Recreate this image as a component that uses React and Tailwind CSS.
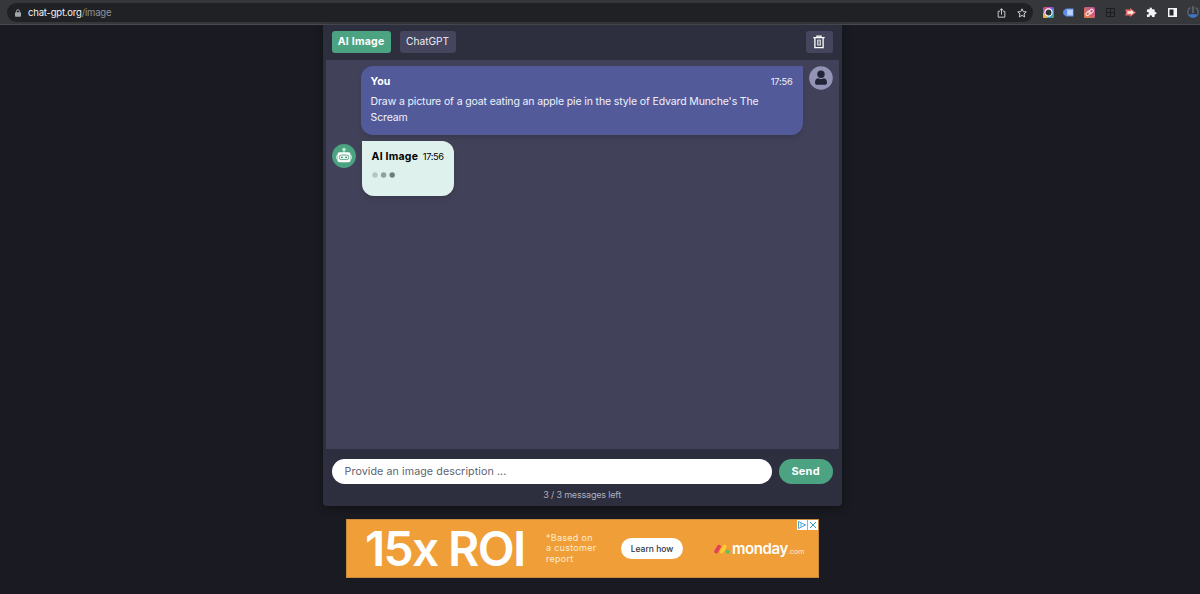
import clsx from 'clsx'

function LockIcon() {
  return (
    <svg viewBox="0 0 8 10" className="ml-2 h-[8px] w-[6px] fill-[#a3a6aa]">
      <path d="M1 4h6a1 1 0 0 1 1 1v4a1 1 0 0 1-1 1H1a1 1 0 0 1-1-1V5a1 1 0 0 1 1-1z" />
      <path d="M2 4.500V2.700a2 2 0 0 1 4 0V4.500" fill="none" stroke="#a3a6aa" strokeWidth="1.300" />
    </svg>
  )
}

function ShareIcon() {
  return (
    <svg viewBox="0 0 10 12" className="h-[10px] w-[9px] fill-none stroke-[#c6c8cb]" strokeWidth="1.200">
      <path d="M3 4H1v7h8V4H7M5 8V1M2.800 3 5 .9 7.200 3" />
    </svg>
  )
}

function StarIcon() {
  return (
    <svg viewBox="0 0 12 12" className="h-[10px] w-[10px] fill-none stroke-[#d0d2d5]" strokeWidth="1.200">
      <path d="m6 1 1.500 3.300 3.600.4-2.700 2.400.8 3.600L6 8.900l-3.200 1.800.8-3.600L.9 4.700l3.600-.4z" />
    </svg>
  )
}

function Extensions() {
  return (
    <div className="ml-[9.500px] flex h-[11px] shrink-0 items-center gap-[9.700px]">
      <svg viewBox="0 0 11 11" className="h-[11px] w-[11px]">
        <defs>
          <linearGradient id="ring" x1="0" y1="0" x2="1" y2="1">
            <stop offset="0" stopColor="#ec4c47" />
            <stop offset="0.35" stopColor="#ad4bc8" />
            <stop offset="0.65" stopColor="#368be8" />
            <stop offset="1" stopColor="#45b968" />
          </linearGradient>
        </defs>
        <rect width="11" height="11" rx="1.500" fill="url(#ring)" />
        <path d="M0 5.500V10a1 1 0 0 0 1 1h4z" fill="#e8b63a" />
        <circle cx="5.500" cy="5.500" r="3.600" fill="#303338" stroke="#fff" strokeWidth="1.200" />
      </svg>
      <svg viewBox="0 0 11 11" className="h-[11px] w-[11px]">
        <path d="M3 1.500h7.500v8H3L.2 7V4z" fill="#5e8ee9" />
        <path d="M4 2.500h6v6H4z" fill="#a9c7fa" />
        <path d="M6 3.500v4M8 3.500v4" stroke="#d9e6fd" strokeWidth=".8" />
      </svg>
      <svg viewBox="0 0 11 11" className="h-[11px] w-[11px]">
        <defs>
          <linearGradient id="link" x1="0" y1="1" x2="1" y2="0">
            <stop offset="0" stopColor="#e6813f" />
            <stop offset="1" stopColor="#b749a4" />
          </linearGradient>
        </defs>
        <rect width="11" height="11" rx="1.500" fill="url(#link)" />
        <g fill="none" stroke="#fbe6e6" strokeWidth="1">
          <rect x="1.600" y="5" width="5" height="3" rx="1.500" transform="rotate(-45 4 6.500)" />
          <rect x="4.600" y="3" width="5" height="3" rx="1.500" transform="rotate(-45 7 4.500)" />
        </g>
      </svg>
      <svg viewBox="0 0 11 11" className="h-[11px] w-[11px] fill-none stroke-[#1c1d1f]" strokeWidth="1">
        <path d="M1.500 1.500h8v8h-8zM5.500 1.500v8M1.500 5.500h8" />
      </svg>
      <svg viewBox="0 0 11 11" className="h-[11px] w-[11px]">
        <path d="M.2 2.500h4.800V1l6 4.500-6 4.500V8.500H.2l1-3z" fill="#df6d67" />
        <path d="M2.500 4.300h3.500V3L9 5.500 6 8V6.700H2.500z" fill="#fde9e6" />
      </svg>
      <svg viewBox="0 0 24 24" className="h-[11px] w-[11px] fill-[#f1f3f4]">
        <path d="M20.500 11H19V7a2 2 0 0 0-2-2h-4V3.500a2.500 2.500 0 0 0-5 0V5H4a2 2 0 0 0-2 2v3.800h1.500a2.700 2.700 0 0 1 0 5.400H2V20c0 1.100.9 2 2 2h3.800v-1.500a2.700 2.700 0 0 1 5.400 0V22H17a2 2 0 0 0 2-2v-4h1.500a2.500 2.500 0 0 0 0-5z" />
      </svg>
      <svg viewBox="0 0 11 11" className="h-[11px] w-[11px]">
        <path d="M1 1h9v9H1z" fill="#f4f5f6" />
        <path d="M2.500 2.500h4v6h-4z" fill="#25262a" />
      </svg>
      <svg viewBox="0 0 12 14" className="h-[14px] w-[12px] shrink-0 fill-none">
        <path d="M3.500 2.500a5.200 5.200 0 1 0 5 0" stroke="#55616c" strokeWidth="1.500" />
        <path d="M6 1v7" stroke="#626e79" strokeWidth="1.500" />
        <path d="M1.500 10c3-1.500 6-1.500 9 0-1.300 3.600-7.500 3.800-9 0z" fill="#3b75c4" />
      </svg>
    </div>
  )
}

function BrowserBar() {
  return (
    <header className="flex h-[25px] items-center overflow-hidden border-b border-[#4b4c51] bg-[#36373b] pl-[7px]">
      <div className="mt-px flex h-[19px] w-[1026px] shrink-0 items-center rounded-full bg-[#202124]">
        <LockIcon />
        <span className="ml-[7px] text-[9.500px] leading-none tracking-[-0.2px] text-[#909397]">
          <span className="text-[#f1f2f3]">chat-gpt.org</span>/image
        </span>
        <div className="mr-[6.500px] ml-auto flex items-center gap-[11px]">
          <ShareIcon />
          <StarIcon />
        </div>
      </div>
      <Extensions />
    </header>
  )
}

function TrashIcon() {
  return (
    <svg viewBox="0 0 12 14" className="h-[14px] w-[12px] fill-none stroke-white" strokeWidth="1.300">
      <path d="M.3 2.600h11.400M4 2.300V1.200h4v1.100M1.900 2.600v10h8.200v-10" />
      <path d="M4.500 5v5.200h3V5zM6 5v5" strokeWidth=".8" opacity=".9" />
    </svg>
  )
}

function Tab({ active, className, children }) {
  return (
    <button
      type="button"
      className={clsx(
        'flex h-[22px] items-center justify-center rounded-[3px] whitespace-nowrap',
        active ? 'bg-[#4ba381] font-bold text-white' : 'bg-[#45455e] text-[#ececf4]',
        className,
      )}
    >
      {children}
    </button>
  )
}

function UserAvatar() {
  return (
    <svg viewBox="0 0 24 24" className="h-6 w-6 shrink-0">
      <circle cx="12" cy="12" r="11.800" fill="#9293b5" />
      <circle cx="12" cy="8.300" r="3.700" fill="#232438" />
      <path d="M6 16.500c0-2.500 1.300-4 3-4.200 1.800 1.100 4.200 1.100 6 0 1.700.2 3 1.700 3 4.200 0 1.500-.7 2.300-2 2.300H8c-1.300 0-2-.8-2-2.300z" fill="#232438" />
    </svg>
  )
}

function BotAvatar() {
  return (
    <svg viewBox="0 0 24 24" className="h-6 w-6 shrink-0">
      <circle cx="12" cy="12" r="11.900" fill="#4ba381" />
      <circle cx="12" cy="5.500" r="1.800" fill="#b7eccf" />
      <path d="M12 6.500V9" stroke="#b7eccf" strokeWidth="1.200" />
      <rect x="5.500" y="8.300" width="13" height="9.900" rx="1.800" fill="#fff" />
      <path d="M4.300 11.200h1.200v4H4.300zM18.500 11.200h1.200v4h-1.200z" fill="#d9f3e6" />
      <rect x="7.200" y="11" width="9.600" height="4.600" rx="2.100" fill="#f3faf7" stroke="#4ba381" strokeWidth=".9" />
      <circle cx="9.900" cy="13.300" r=".9" fill="#37806a" />
      <circle cx="14.100" cy="13.300" r=".9" fill="#37806a" />
    </svg>
  )
}

function UserMessage() {
  return (
    <div className="flex items-start gap-[6px] pl-[35px]">
      <div className="h-[68.500px] w-[442px] rounded-xl rounded-tr-none bg-[#525a9a] px-[10px] pt-[9px] text-[#f0f1fb] shadow-md">
        <div className="flex h-[14px] items-center justify-between">
          <span className="text-[10.500px] font-bold tracking-[0.1px] text-white">You</span>
          <span className="text-[9.300px] tracking-[-0.2px]">17:56</span>
        </div>
        <p className="mt-[5px] text-[10.500px] leading-[15.500px] tracking-[-0.130px] whitespace-nowrap">
          Draw a picture of a goat eating an apple pie in the style of Edvard Munche's The
          <br />
          Scream
        </p>
      </div>
      <UserAvatar />
    </div>
  )
}

function BotMessage() {
  return (
    <div className="mt-[6.500px] flex items-start pl-[6px]">
      <div className="mt-[3px]">
        <BotAvatar />
      </div>
      <div className="ml-[6px] h-[55px] w-[92px] rounded-xl rounded-tl-none bg-[#dff1ec] px-[10px] pt-[9px] text-black shadow-md">
        <div className="flex h-[14px] items-center justify-between whitespace-nowrap">
          <span className="text-[10.500px] font-bold tracking-[0.220px]">AI Image</span>
          <span className="text-[9.300px] tracking-[-0.4px]">17:56</span>
        </div>
        <svg viewBox="0 0 24 6" className="mt-[8px] h-[6px] w-[24px]">
          <circle cx="3" cy="3" r="2.700" fill="#b3c4c2" />
          <circle cx="11.600" cy="3" r="2.700" fill="#90a19f" />
          <circle cx="20.200" cy="3" r="2.700" fill="#6d7e80" />
        </svg>
      </div>
    </div>
  )
}

function Chat() {
  return (
    <section className="ml-[322.600px] h-[481px] w-[519px] rounded-b bg-[#2d2e3e] px-[3px] shadow-[0_3px_10px_rgba(0,0,0,0.35)]">
      <nav className="flex h-[35px] items-start gap-[9px] px-[6px] pt-[6px]">
        <Tab active className="w-[59px] text-[10.500px] tracking-[0.220px]">AI Image</Tab>
        <Tab className="w-[56px] text-[10.200px]">ChatGPT</Tab>
        <Tab className="ml-auto w-[27px]">
          <TrashIcon />
        </Tab>
      </nav>

      <div className="h-[389px] bg-[#414259] pt-[6px]">
        <UserMessage />
        <BotMessage />
      </div>

      <form className="flex gap-[7px] px-[6px] pt-[10px]">
        <input
          type="text"
          placeholder="Provide an image description ..."
          className="h-[25px] w-[440px] rounded-full bg-white px-[13px] text-[10.700px] tracking-[0.080px] placeholder:text-[#62636f]"
        />
        <button
          type="button"
          className="h-[25px] w-[54px] rounded-full bg-[#4ba381] text-[11px] font-bold tracking-[0.2px] text-white"
        >
          Send
        </button>
      </form>
      <p className="mt-[4px] text-center text-[9px] leading-[14px] tracking-[-0.180px] text-[#b0b1bd]">
        3 / 3 messages left
      </p>
    </section>
  )
}

function AdBanner() {
  return (
    <aside className="relative mt-[13px] ml-[346px] flex h-[59px] w-[473px] items-center border border-[#c98a3c] bg-[#f09e38] whitespace-nowrap text-white">
      <span className="ml-[18px] w-[181px] text-[48px] leading-none font-semibold tracking-[-1.700px]">15x ROI</span>
      <p className="w-[75px] text-[9px] leading-[10.500px] tracking-[0.280px] text-[#fdecd2]">
        *Based on
        <br />a customer
        <br />
        report
      </p>
      <span className="flex h-[21px] w-[62px] items-center justify-center rounded-full bg-white pt-px text-[8.500px] font-medium text-[#33343c]">
        Learn how
      </span>
      <div className="ml-[31px] flex items-center">
        <svg viewBox="0 0 16 10" className="h-[10px] w-[16px]" strokeLinecap="round" strokeWidth="3.900">
          <path d="M2.200 7.500 5 2.700" stroke="#e44258" />
          <path d="M7.800 7.500 10.600 2.700" stroke="#ffcb2f" />
          <circle cx="13.700" cy="7.700" r="1.900" fill="#56c16b" />
        </svg>
        <span className="ml-[2px] text-[15px] leading-none font-semibold tracking-[-0.4px]">monday</span>
        <span className="mt-[5px] text-[7px] leading-none text-[#fdecd2]">.com</span>
      </div>
      <div className="absolute top-0 right-0 flex gap-px">
        <svg viewBox="0 0 10 10" className="h-[10px] w-[10px] bg-white" fill="none" stroke="#3596ce" strokeWidth=".9">
          <path d="M1.500 1.500v7L8.500 5zM4 3.500v3" />
        </svg>
        <svg viewBox="0 0 10 10" className="h-[10px] w-[10px] bg-white" stroke="#3596ce" strokeWidth="1">
          <path d="m2 2 6 6M8 2 2 8" />
        </svg>
      </div>
    </aside>
  )
}

export default function App() {
  return (
    <div className="h-[594px] w-[1200px] overflow-hidden bg-[#1a1a22] font-['Inter','Open_Sans',sans-serif]">
      <BrowserBar />
      <Chat />
      <AdBanner />
    </div>
  )
}
